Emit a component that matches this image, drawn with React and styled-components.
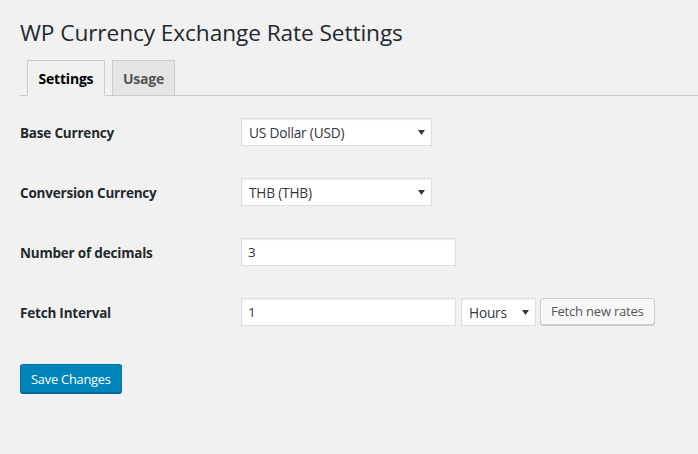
import styled, { createGlobalStyle } from "styled-components";

const GlobalStyle = createGlobalStyle`
    html, body{
        margin: 0;
        padding: 0;
        background: #f1f1f1;
    }
    body{
        font-family: "Open Sans", "Noto Sans", sans-serif;
        color: #23282d;
        width: 698px;
        height: 454px;
        overflow: hidden;
    }
`

const fields = [
    { label: "Base Currency", type: "select", value: "US Dollar (USD)" },
    { label: "Conversion Currency", type: "select", value: "THB (THB)" },
    { label: "Number of decimals", type: "input", value: "3" },
    { label: "Fetch Interval", type: "interval", value: "1" },
];

const Arrow = () => (
    <ArrowIcon width="7" height="5" viewBox="0 0 7 5">
        <path d="M0 0 H7 L3.5 5 Z" fill="#32373c" />
    </ArrowIcon>
)

const Select = ({ value, width }) => (
    <SelectBox $width={width}>
        <span>{value}</span>
        <Arrow />
    </SelectBox>
)

const App = () => {
    return (
        <Wrap>
            <GlobalStyle />
            <Title>WP Currency Exchange Rate Settings</Title>
            <Tabs>
                <Tab $active>Settings</Tab>
                <Tab>Usage</Tab>
            </Tabs>
            <Form>
                {fields.map((field) => (
                    <Row key={field.label}>
                        <Label>{field.label}</Label>
                        <Field>
                            {field.type === "select" && <Select value={field.value} width={191} />}
                            {field.type === "input" && <Input>{field.value}</Input>}
                            {field.type === "interval" && (
                                <>
                                    <Input>{field.value}</Input>
                                    <Select value="Hours" width={75} />
                                    <Button>Fetch new rates</Button>
                                </>
                            )}
                        </Field>
                    </Row>
                ))}
            </Form>
            <SaveButton>Save Changes</SaveButton>
        </Wrap>
    )
}

const Wrap = styled.div`
    padding: 0 0 0 20px;
`

const Title = styled.h1`
    margin: 0;
    padding: 18px 0 0 0;
    font-size: 22.7px;
    font-weight: 400;
    line-height: 29px;
    letter-spacing: -0.1px;
    color: #23282d;
`

const Tabs = styled.div`
    display: flex;
    gap: 7px;
    padding-left: 7px;
    margin-top: 13px;
    border-bottom: 1px solid #ccc;
    height: 35px;
`

const Tab = styled.div`
    box-sizing: border-box;
    display: flex;
    align-items: center;
    padding: 0 ${(p) => (p.$active ? "10.5px" : "10px")};
    height: ${(p) => (p.$active ? "36px" : "35px")};
    border: 1px solid #ccc;
    border-bottom: ${(p) => (p.$active ? "1px solid #f1f1f1" : "none")};
    background: ${(p) => (p.$active ? "#f1f1f1" : "#e5e5e5")};
    color: ${(p) => (p.$active ? "#000" : "#555")};
    font-size: 14px;
    font-weight: 700;
    letter-spacing: -0.2px;
    position: relative;
    z-index: 1;
`

const Form = styled.div`
    display: grid;
    grid-template-columns: 221px auto;
    padding-top: 7px;
`

const Row = styled.div`
    display: contents;
`

const Label = styled.div`
    display: flex;
    align-items: center;
    height: 60px;
    font-size: 13.5px;
    font-weight: 700;
    letter-spacing: -0.2px;
    color: #23282d;
`

const Field = styled.div`
    display: flex;
    align-items: center;
    gap: 5px;
    height: 60px;
    margin-top: -1px;
`

const SelectBox = styled.div`
    box-sizing: border-box;
    position: relative;
    display: flex;
    align-items: center;
    width: ${(p) => p.$width}px;
    height: 28px;
    padding: 0 7px;
    background: #fff;
    border: 1px solid #ddd;
    box-shadow: inset 0 1px 2px rgba(0, 0, 0, 0.07);
    font-size: 13.7px;
    color: #32373c;
    letter-spacing: -0.2px;
`

const ArrowIcon = styled.svg`
    position: absolute;
    right: 6px;
    top: 11px;
`

const Input = styled.div`
    box-sizing: border-box;
    display: flex;
    align-items: center;
    width: 215px;
    height: 28px;
    padding: 0 6px;
    background: #fff;
    border: 1px solid #ddd;
    box-shadow: inset 0 1px 2px rgba(0, 0, 0, 0.07);
    font-size: 13.5px;
    color: #32373c;
`

const Button = styled.div`
    box-sizing: border-box;
    display: flex;
    align-items: center;
    height: 27px;
    margin-top: -2px;
    margin-left: -1px;
    padding: 0 10px;
    background: #f7f7f7;
    border: 1px solid #ccc;
    border-radius: 3px;
    box-shadow: 0 1px 0 #ccc;
    font-size: 13px;
    color: #555;
    letter-spacing: -0.2px;
`

const SaveButton = styled.div`
    box-sizing: border-box;
    display: inline-flex;
    align-items: center;
    margin-top: 21px;
    height: 29px;
    padding: 0 10px;
    background: #0085ba;
    border: 1px solid #0073aa;
    border-bottom-color: #006799;
    border-radius: 3px;
    box-shadow: 0 1px 0 #006799;
    font-size: 12.8px;
    color: #fff;
    letter-spacing: -0.2px;
`

export default App;
